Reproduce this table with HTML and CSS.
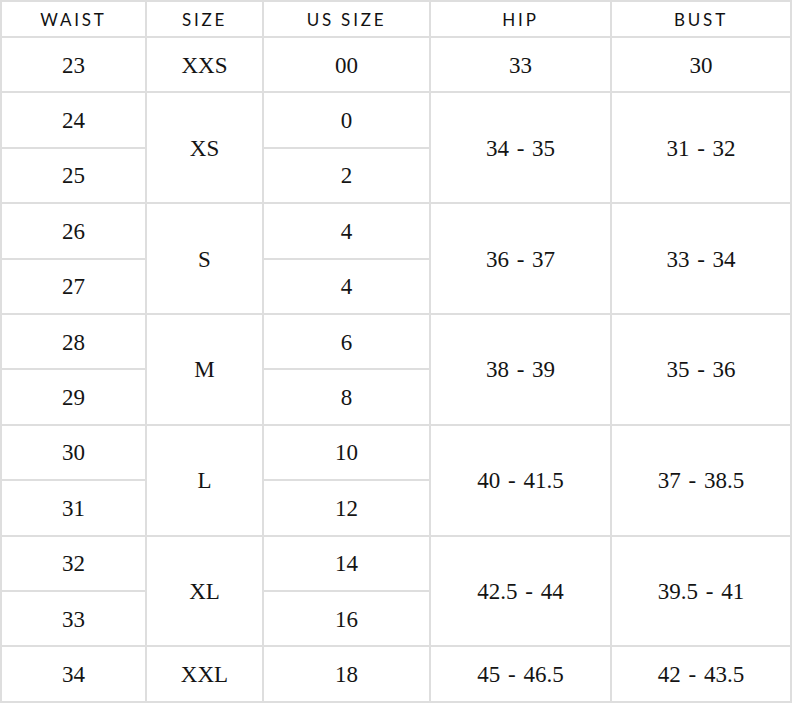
FILE: index.html
```html
<!DOCTYPE html>
<html>
<head>
<meta charset="utf-8">
<link rel="stylesheet" href="styles.css">
</head>
<body>
<table class="chart">
  <colgroup>
    <col class="c1"><col class="c2"><col class="c3"><col class="c4"><col class="c5">
  </colgroup>
  <thead>
    <tr class="head"><th>WAIST</th><th>SIZE</th><th>US SIZE</th><th>HIP</th><th>BUST</th></tr>
  </thead>
  <tbody>
    <tr><td>23</td><td>XXS</td><td>00</td><td>33</td><td>30</td></tr>
    <tr><td>24</td><td rowspan="2">XS</td><td>0</td><td rowspan="2">34 - 35</td><td rowspan="2">31 - 32</td></tr>
    <tr><td>25</td><td>2</td></tr>
    <tr><td>26</td><td rowspan="2">S</td><td>4</td><td rowspan="2">36 - 37</td><td rowspan="2">33 - 34</td></tr>
    <tr><td>27</td><td>4</td></tr>
    <tr><td>28</td><td rowspan="2">M</td><td>6</td><td rowspan="2">38 - 39</td><td rowspan="2">35 - 36</td></tr>
    <tr><td>29</td><td>8</td></tr>
    <tr><td>30</td><td rowspan="2">L</td><td>10</td><td rowspan="2">40 - 41.5</td><td rowspan="2">37 - 38.5</td></tr>
    <tr><td>31</td><td>12</td></tr>
    <tr><td>32</td><td rowspan="2">XL</td><td>14</td><td rowspan="2">42.5 - 44</td><td rowspan="2">39.5 - 41</td></tr>
    <tr><td>33</td><td>16</td></tr>
    <tr><td>34</td><td>XXL</td><td>18</td><td>45 - 46.5</td><td>42 - 43.5</td></tr>
  </tbody>
</table>
</body>
</html>
```
FILE: styles.css
```css
html, body {
  margin: 0;
  padding: 0;
  background: #ffffff;
}
.chart {
  border-collapse: collapse;
  table-layout: fixed;
  width: 790px;
  margin: 0;
  color: #141414;
}
.c1 { width: 145px; }
.c2 { width: 117px; }
.c3 { width: 167px; }
.c4 { width: 181px; }
.c5 { width: 180px; }
.chart th,
.chart td {
  border: 2px solid #dedede;
  text-align: center;
  vertical-align: middle;
  padding: 0;
}
.chart th {
  font-family: "Lato", "Open Sans", sans-serif;
  font-weight: 400;
  font-size: 17px;
  letter-spacing: 2.8px;
  color: #111111;
  height: 33px;
  padding-top: 1px;
}
.chart td {
  font-family: "Liberation Serif", "Times New Roman", serif;
  font-size: 23px;
  word-spacing: 2px;
  height: 51.4px;
  padding-top: 2px;
}
```
